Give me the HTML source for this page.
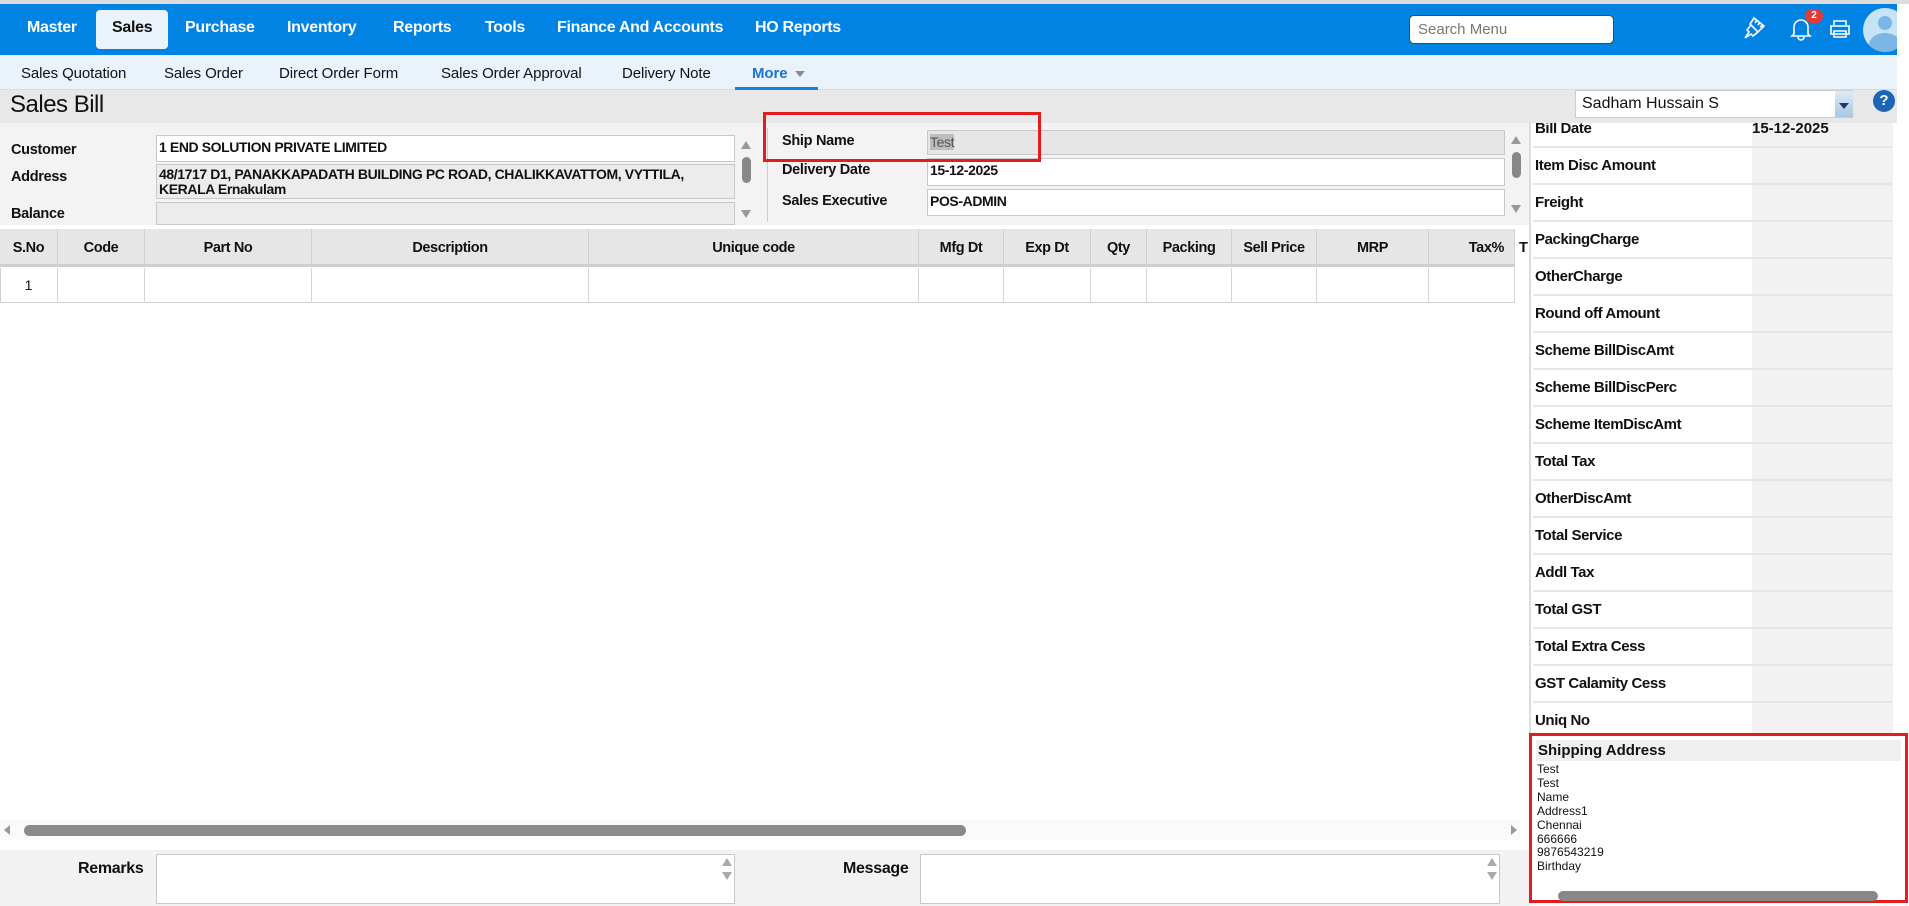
<!DOCTYPE html>
<html><head><meta charset="utf-8"><style>
*{box-sizing:border-box;margin:0;padding:0}
body{width:1909px;height:906px;overflow:hidden;background:#fff;font-family:"Liberation Sans",sans-serif;position:relative;color:#111}
.a{position:absolute;white-space:nowrap}
.nav{left:0;top:4px;width:1897px;height:51px;background:#0083e3}
.m{color:#fff;font-weight:bold;font-size:16px;top:19px;letter-spacing:-0.3px}
.sub{color:#111;font-size:15px;top:65px;letter-spacing:-0.1px}
.lbl{font-size:14.5px;font-weight:bold;letter-spacing:-0.3px}
.box{border:1px solid #c8c8c8;background:#fff;font-size:14px;font-weight:bold;padding:3px 2px;letter-spacing:-0.4px}
.th{top:229px;height:38px;border-right:1px solid #cfcfcf;font-size:14.5px;font-weight:bold;text-align:center;line-height:38px;letter-spacing:-0.4px}
.td{top:268px;height:35px;border-right:1px solid #d5d5d5}
.row{left:4px;width:360px;height:37px;border-bottom:2px solid #e6e6e6}
.row .l{position:absolute;left:0;top:0;width:219px;height:35px;background:#fff;font-weight:bold;font-size:15px;line-height:35px;letter-spacing:-0.4px;padding-left:2px}
.row .v{position:absolute;left:219px;top:0;width:141px;height:35px;background:#f2f2f2;font-weight:bold;font-size:15px;line-height:35px}
.tri{width:0;height:0;border-left:5px solid transparent;border-right:5px solid transparent}
.up{border-bottom:8px solid #999}.dn{border-top:8px solid #999}
</style></head><body>
<div class="a" style="left:0;top:0;width:1909px;height:4px;background:#ddd"></div>
<div class="a nav"></div>
<div class="a m" style="left:27px">Master</div>
<div class="a" style="left:96px;top:10px;width:72px;height:39px;background:#eaf3fb;border-radius:4px"></div>
<div class="a m" style="left:112px;color:#111">Sales</div>
<div class="a m" style="left:185px">Purchase</div>
<div class="a m" style="left:287px">Inventory</div>
<div class="a m" style="left:393px">Reports</div>
<div class="a m" style="left:485px">Tools</div>
<div class="a m" style="left:557px">Finance And Accounts</div>
<div class="a m" style="left:755px">HO Reports</div>
<div class="a" style="left:1409px;top:15px;width:205px;height:29px;background:#fff;border:1px solid #2d5a2d;border-radius:5px;color:#777;font-size:15px;padding:5px 8px">Search Menu</div>
<svg class="a" style="left:1742px;top:14px" width="26" height="28" viewBox="0 0 26 28" fill="none" stroke="#fff" stroke-width="1.6"><path d="M12 4l10 8-6 6-8-8z M9 11l-4 5 2 2-4 6 6-4 2 2 5-4 M15 6l-2 3 M18 8l-2 3 M21 11l-3 2"/></svg>
<svg class="a" style="left:1790px;top:16px" width="22" height="26" viewBox="0 0 22 26" fill="none" stroke="#fff" stroke-width="1.6"><path d="M4 18V11a7 7 0 0 1 14 0v7l2 2H2z M8 21a3 3 0 0 0 6 0"/></svg>
<div class="a" style="left:1805px;top:9px;width:18px;height:14px;background:#e53935;border-radius:7px;color:#fff;font-size:10px;font-weight:bold;text-align:center;line-height:14px">2</div>
<svg class="a" style="left:1829px;top:19px" width="22" height="20" viewBox="0 0 22 20" fill="none" stroke="#fff" stroke-width="1.6"><path d="M5 6V2h12v4 M2 7h18v8H2z M5 12h12v6H5z"/></svg>
<div class="a" style="left:1863px;top:8px;width:44px;height:44px;border-radius:50%;background:#c6e3f8;overflow:hidden"><div class="a" style="left:15px;top:8px;width:14px;height:14px;border-radius:50%;background:#7bb6e6"></div><div class="a" style="left:6px;top:25px;width:32px;height:24px;border-radius:50%;background:#7bb6e6"></div></div>
<div class="a" style="left:1897px;top:4px;width:12px;height:86px;background:#fff"></div>
<div class="a" style="left:0;top:55px;width:1897px;height:35px;background:#eaf3fb;border-bottom:1px solid #d3dde6"></div>
<div class="a sub" style="left:21px">Sales Quotation</div>
<div class="a sub" style="left:164px">Sales Order</div>
<div class="a sub" style="left:279px">Direct Order Form</div>
<div class="a sub" style="left:441px">Sales Order Approval</div>
<div class="a sub" style="left:622px">Delivery Note</div>
<div class="a sub" style="left:752px;color:#1a73d6;font-weight:bold">More</div>
<div class="a tri" style="left:795px;top:71px;border-top:6px solid #8a8a8a"></div>
<div class="a" style="left:735px;top:87px;width:83px;height:3px;background:#1a7fd6"></div>
<div class="a" style="left:0;top:90px;width:1897px;height:33px;background:#e8e8e8"></div>
<div class="a" style="left:10px;top:91px;font-size:24px;letter-spacing:-0.5px">Sales Bill</div>
<div class="a" style="left:1575px;top:90px;width:278px;height:28px;background:#fff;border:1px solid #ccc;font-size:16px;padding:4px 6px">Sadham Hussain S</div>
<div class="a" style="left:1835px;top:91px;width:18px;height:26px;background:linear-gradient(#dfeaf6,#a9c7e6)"></div>
<div class="a tri" style="left:1839px;top:103px;border-top:6px solid #1b3c70"></div>
<div class="a" style="left:1873px;top:90px;width:22px;height:22px;border-radius:50%;background:#1b64b8;color:#fff;font-weight:bold;font-size:15px;text-align:center;line-height:22px">?</div>
<div class="a" style="left:0;top:123px;width:1529px;height:102px;background:#f3f3f3"></div>
<div class="a lbl" style="left:11px;top:142px">Customer</div>
<div class="a lbl" style="left:11px;top:169px">Address</div>
<div class="a lbl" style="left:11px;top:206px">Balance</div>
<div class="a box" style="left:156px;top:135px;width:579px;height:27px">1 END SOLUTION PRIVATE LIMITED</div>
<div class="a box" style="left:156px;top:164px;width:579px;height:35px;background:#ececec;line-height:15px;padding-top:2px;white-space:normal;padding-right:20px">48/1717 D1, PANAKKAPADATH BUILDING PC ROAD, CHALIKKAVATTOM, VYTTILA, KERALA Ernakulam</div>
<div class="a box" style="left:156px;top:202px;width:579px;height:23px;background:#ececec"></div>
<div class="a tri up" style="left:741px;top:141px"></div>
<div class="a" style="left:742px;top:157px;width:9px;height:26px;background:#888;border-radius:5px"></div>
<div class="a tri dn" style="left:741px;top:210px"></div>
<div class="a" style="left:767px;top:128px;width:1px;height:94px;background:#ccc"></div>
<div class="a lbl" style="left:782px;top:133px">Ship Name</div>
<div class="a lbl" style="left:782px;top:162px">Delivery Date</div>
<div class="a lbl" style="left:782px;top:193px">Sales Executive</div>
<div class="a box" style="left:927px;top:130px;width:578px;height:25px;background:#e6e6e6;font-weight:normal;color:#555"><span style="background:#bdbdbd">Test</span></div>
<div class="a box" style="left:927px;top:158px;width:578px;height:28px">15-12-2025</div>
<div class="a box" style="left:927px;top:189px;width:578px;height:27px">POS-ADMIN</div>
<div class="a" style="left:763px;top:112px;width:278px;height:50px;border:3px solid #e21d1d"></div>
<div class="a tri up" style="left:1511px;top:136px"></div>
<div class="a" style="left:1512px;top:152px;width:9px;height:26px;background:#888;border-radius:5px"></div>
<div class="a tri dn" style="left:1511px;top:205px"></div>
<div class="a" style="left:0;top:229px;width:1515px;height:38px;background:#e6e6e6;border-bottom:3px solid #cfcfcf"></div>
<div class="a th" style="left:0;width:58px">S.No</div>
<div class="a th" style="left:58px;width:87px">Code</div>
<div class="a th" style="left:145px;width:167px">Part No</div>
<div class="a th" style="left:312px;width:277px">Description</div>
<div class="a th" style="left:589px;width:330px">Unique code</div>
<div class="a th" style="left:919px;width:85px">Mfg Dt</div>
<div class="a th" style="left:1004px;width:87px">Exp Dt</div>
<div class="a th" style="left:1091px;width:56px">Qty</div>
<div class="a th" style="left:1147px;width:85px">Packing</div>
<div class="a th" style="left:1232px;width:85px">Sell Price</div>
<div class="a th" style="left:1317px;width:112px">MRP</div>
<div class="a th" style="left:1429px;width:86px;text-align:right;padding-right:10px">Tax%</div>
<div class="a th" style="left:1515px;width:14px;border:0;text-align:left;padding-left:4px;overflow:hidden">T</div>
<div class="a" style="left:0;top:268px;width:1515px;height:35px;border-bottom:1px solid #d0d0d0;border-left:1px solid #d0d0d0"></div>
<div class="a td" style="left:0;width:58px;font-size:14px;text-align:center;line-height:35px">1</div>
<div class="a td" style="left:58px;width:87px"></div><div class="a td" style="left:145px;width:167px"></div><div class="a td" style="left:312px;width:277px"></div><div class="a td" style="left:589px;width:330px"></div><div class="a td" style="left:919px;width:85px"></div><div class="a td" style="left:1004px;width:87px"></div><div class="a td" style="left:1091px;width:56px"></div><div class="a td" style="left:1147px;width:85px"></div><div class="a td" style="left:1232px;width:85px"></div><div class="a td" style="left:1317px;width:112px"></div><div class="a td" style="left:1429px;width:86px"></div>
<div class="a" style="left:0;top:820px;width:1520px;height:20px;background:#fafafa"></div>
<div class="a" style="left:24px;top:825px;width:942px;height:11px;background:#8a8a8a;border-radius:6px"></div>
<div class="a" style="left:4px;top:825px;width:0;height:0;border-top:5px solid transparent;border-bottom:5px solid transparent;border-right:6px solid #999"></div>
<div class="a" style="left:1511px;top:825px;width:0;height:0;border-top:5px solid transparent;border-bottom:5px solid transparent;border-left:6px solid #999"></div>
<div class="a" style="left:0;top:850px;width:1529px;height:56px;background:#f2f2f2"></div>
<div class="a lbl" style="left:78px;top:860px;font-size:16px">Remarks</div>
<div class="a" style="left:156px;top:854px;width:579px;height:50px;background:#fff;border:1px solid #c8c8c8"></div>
<div class="a lbl" style="left:843px;top:860px;font-size:16px">Message</div>
<div class="a" style="left:920px;top:854px;width:580px;height:50px;background:#fff;border:1px solid #c8c8c8"></div>
<div class="a tri up" style="left:722px;top:858px;border-bottom-color:#aaa"></div><div class="a tri dn" style="left:722px;top:872px;border-top-color:#aaa"></div>
<div class="a tri up" style="left:1487px;top:858px;border-bottom-color:#aaa"></div><div class="a tri dn" style="left:1487px;top:872px;border-top-color:#aaa"></div>
<div class="a" style="left:1529px;top:123px;width:380px;height:610px;overflow:hidden;background:#fff">
<div class="a" style="left:0;top:0;width:2px;height:610px;background:#ddd"></div>
<div style="position:absolute;left:0;top:-12px;width:380px;height:640px">
<div class="a row" style="top:0"><div class="l">Bill Date</div><div class="v">15-12-2025</div></div>
<div class="a row" style="top:37px"><div class="l">Item Disc Amount</div><div class="v"></div></div>
<div class="a row" style="top:74px"><div class="l">Freight</div><div class="v"></div></div>
<div class="a row" style="top:111px"><div class="l">PackingCharge</div><div class="v"></div></div>
<div class="a row" style="top:148px"><div class="l">OtherCharge</div><div class="v"></div></div>
<div class="a row" style="top:185px"><div class="l">Round off Amount</div><div class="v"></div></div>
<div class="a row" style="top:222px"><div class="l">Scheme BillDiscAmt</div><div class="v"></div></div>
<div class="a row" style="top:259px"><div class="l">Scheme BillDiscPerc</div><div class="v"></div></div>
<div class="a row" style="top:296px"><div class="l">Scheme ItemDiscAmt</div><div class="v"></div></div>
<div class="a row" style="top:333px"><div class="l">Total Tax</div><div class="v"></div></div>
<div class="a row" style="top:370px"><div class="l">OtherDiscAmt</div><div class="v"></div></div>
<div class="a row" style="top:407px"><div class="l">Total Service</div><div class="v"></div></div>
<div class="a row" style="top:444px"><div class="l">Addl Tax</div><div class="v"></div></div>
<div class="a row" style="top:481px"><div class="l">Total GST</div><div class="v"></div></div>
<div class="a row" style="top:518px"><div class="l">Total Extra Cess</div><div class="v"></div></div>
<div class="a row" style="top:555px"><div class="l">GST Calamity Cess</div><div class="v"></div></div>
<div class="a row" style="top:592px"><div class="l">Uniq No</div><div class="v"></div></div>
</div></div>
<div class="a" style="left:1529px;top:733px;width:379px;height:170px;border:3px solid #e21d1d;background:#fff">
<div class="a" style="left:4px;top:4px;width:365px;height:21px;background:#efefef;font-weight:bold;font-size:15px;line-height:21px;padding-left:2px">Shipping Address</div>
<div class="a" style="left:5px;top:27px;font-size:12px;line-height:13.9px;white-space:pre">Test
Test
Name
Address1
Chennai
666666
9876543219
Birthday</div>
<div class="a" style="left:26px;top:155px;width:320px;height:10px;background:#888;border-radius:5px"></div>
</div>
</body></html>
